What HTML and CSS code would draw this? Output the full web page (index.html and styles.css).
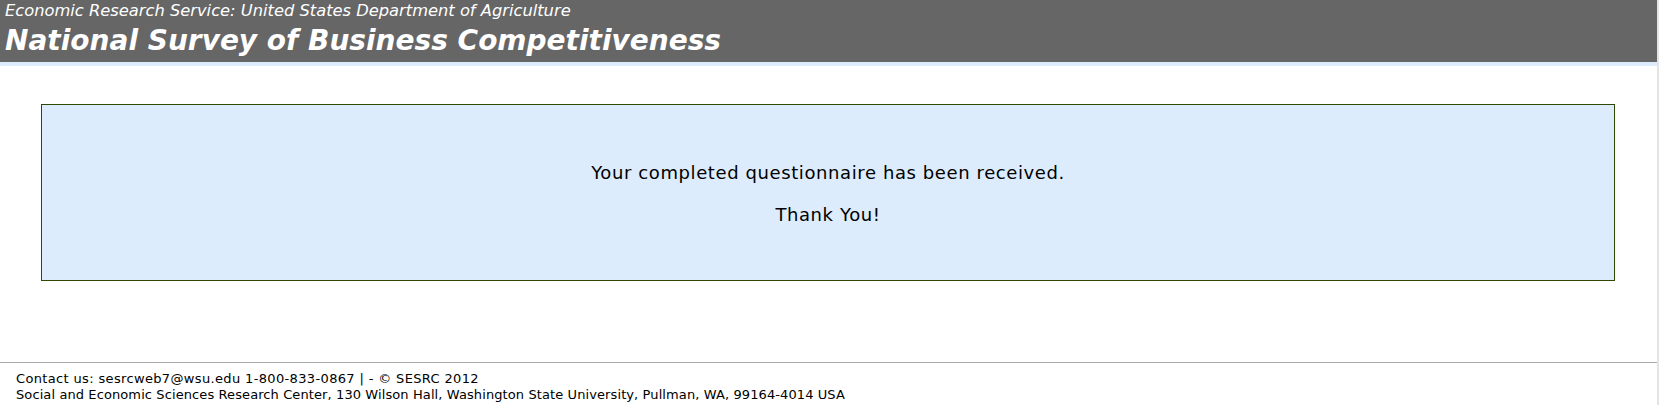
FILE: index.html
```html
<!DOCTYPE html>
<html lang="en">
<head>
<meta charset="utf-8">
<title>National Survey of Business Competitiveness</title>
<link rel="stylesheet" href="styles.css">
</head>
<body>
<div class="page">
  <header class="masthead">
    <div class="agency">Economic Research Service: United States Department of Agriculture</div>
    <h1 class="title">National Survey of Business Competitiveness</h1>
  </header>
  <div class="strip"></div>
  <main class="content">
    <section class="notice">
      <p>Your completed questionnaire has been received.</p>
      <p>Thank You!</p>
    </section>
  </main>
  <footer class="footer">
    <div class="contact">Contact us: sesrcweb7@wsu.edu 1-800-833-0867 | - &copy; SESRC 2012</div>
    <div>Social and Economic Sciences Research Center, 130 Wilson Hall, Washington State University, Pullman, WA, 99164-4014 USA</div>
  </footer>
</div>
</body>
</html>
```
FILE: styles.css
```css
html, body {
  margin: 0;
  padding: 0;
  background: #ffffff;
}
body {
  font-family: "DejaVu Sans", Verdana, sans-serif;
  color: #000;
}
.page {
  width: 1657px;
  height: 405px;
  border-right: 2px solid #e4e4e4;
  display: flex;
  flex-direction: column;
  overflow: hidden;
}
.masthead {
  background: #666666;
  color: #ffffff;
  height: 62px;
  padding-left: 5px;
  box-sizing: border-box;
  display: flex;
  flex-direction: column;
}
.agency {
  font-style: italic;
  font-size: 16.3px;
  line-height: 22px;
}
.title {
  margin: 0;
  font-style: italic;
  font-weight: bold;
  font-size: 28px;
  line-height: 38px;
}
.strip {
  height: 4px;
  background: #ddecfd;
}
.content {
  padding: 38px 42px 0 41px;
  height: 296px;
  box-sizing: border-box;
}
.notice {
  background: #ddecfd;
  border: 1px solid #2f4a00;
  height: 177px;
  box-sizing: border-box;
  display: flex;
  flex-direction: column;
  align-items: center;
  padding-top: 56px;
  gap: 18px;
  font-size: 18px;
  line-height: 24px;
  letter-spacing: 0.6px;
}
.notice p {
  margin: 0;
}
.footer {
  border-top: 1px solid #aaaaaa;
  padding: 8px 0 0 16px;
  font-size: 13px;
  line-height: 16px;
  letter-spacing: 0.1px;
}
.contact {
  letter-spacing: 0.35px;
}
```
